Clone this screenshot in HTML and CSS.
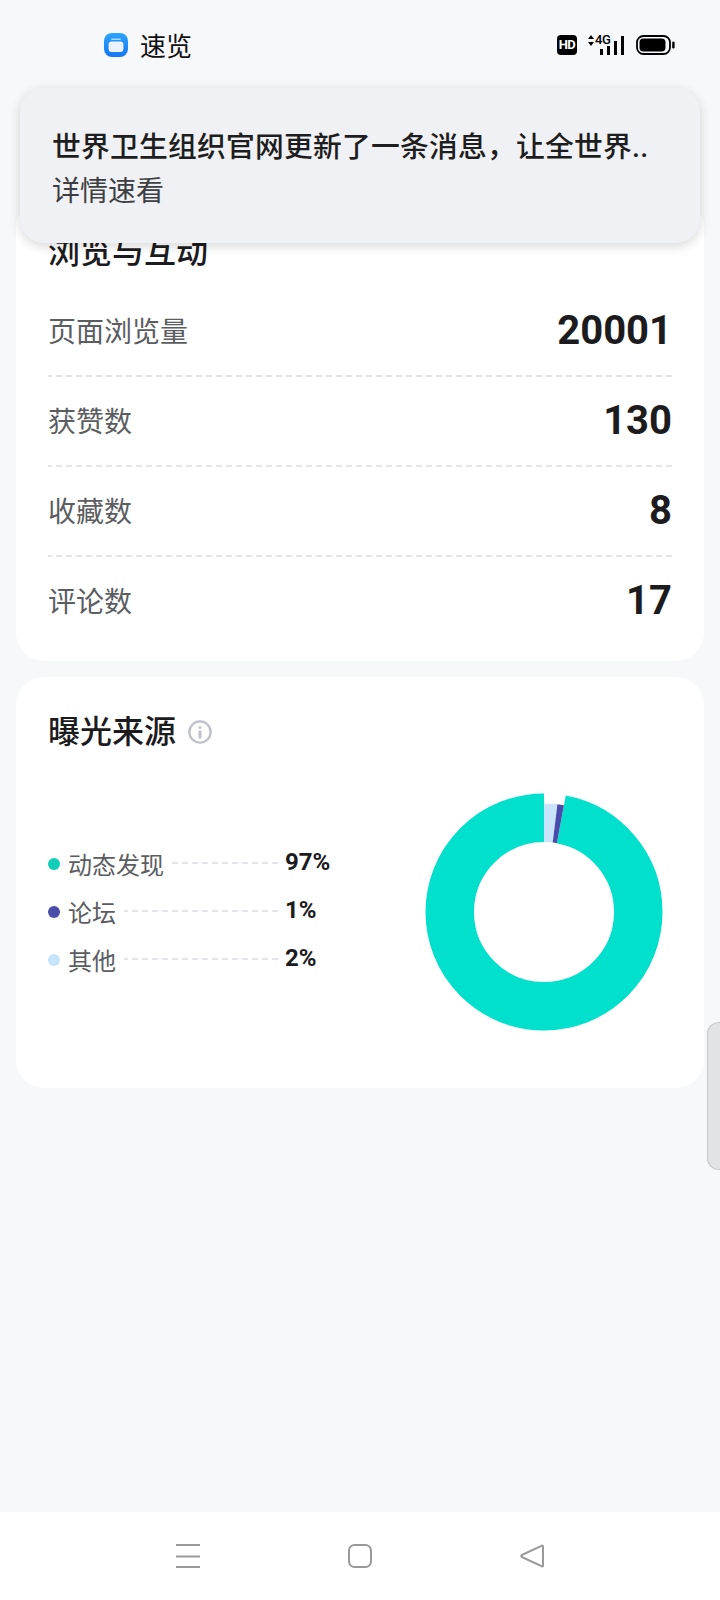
FILE: index.html
```html
<!DOCTYPE html>
<html lang="zh-CN">
<head>
    <meta charset="UTF-8">
    <meta name="viewport" content="width=device-width, initial-scale=1.0">
    <title>速览</title>

    <link rel="stylesheet" href="styles.css">
</head>
<body>

<header class="status-bar">
    <div class="app-name">
        <svg class="app-icon" width="24" height="24" viewBox="0 0 24 24">
            <defs>
                <linearGradient id="appBlue" x1="0" y1="0" x2="0" y2="1">
                    <stop offset="0" stop-color="#2aa4fb"/>
                    <stop offset="1" stop-color="#1676f3"/>
                </linearGradient>
            </defs>
            <rect width="24" height="24" rx="8" fill="url(#appBlue)"/>
            <rect x="7" y="5.4" width="10" height="1.6" rx="0.8" fill="#a9d6fd"/>
            <rect x="4.6" y="8.4" width="14.8" height="10.6" rx="3" fill="#eaf3ff"/>
        </svg>
        <span>速览</span>
    </div>
    <div class="status-icons">
        <span class="hd-badge">HD</span>
        <div class="signal">
            <svg class="signal-arrows" width="6" height="11" viewBox="0 0 6 11">
                <path d="M3 0 L6 4 H0 Z M3 11 L0 7 H6 Z" fill="#000"/>
            </svg>
            <span class="signal-type">4G</span>
            <div class="signal-bars">
                <i class="bar bar-1"></i>
                <i class="bar bar-2"></i>
                <i class="bar bar-3"></i>
                <i class="bar bar-4"></i>
            </div>
        </div>
        <svg width="39" height="20" viewBox="0 0 39 20">
            <rect x="1" y="1" width="33" height="18" rx="6.5" fill="none" stroke="#000" stroke-width="1.8"/>
            <rect x="3.5" y="3.5" width="26" height="13" rx="4" fill="#000"/>
            <rect x="36.2" y="6.5" width="2.4" height="7" rx="1.2" fill="#000"/>
        </svg>
    </div>
</header>

<div class="toast">
    <p class="toast-title">世界卫生组织官网更新了一条消息，让全世界..</p>
    <p class="toast-sub">详情速看</p>
</div>

<main class="content">
    <section class="card card-stats">
        <h2 class="card-title">浏览与互动</h2>
        <div class="stat-row">
            <span class="stat-label">页面浏览量</span>
            <span class="stat-value">20001</span>
        </div>
        <div class="stat-row">
            <span class="stat-label">获赞数</span>
            <span class="stat-value">130</span>
        </div>
        <div class="stat-row">
            <span class="stat-label">收藏数</span>
            <span class="stat-value">8</span>
        </div>
        <div class="stat-row">
            <span class="stat-label">评论数</span>
            <span class="stat-value">17</span>
        </div>
    </section>

    <section class="card card-source">
        <h2 class="card-title">
            曝光来源
            <svg class="info-icon" width="24" height="24" viewBox="0 0 24 24">
                <circle cx="12" cy="12" r="10.6" fill="none" stroke="#bfc2c9" stroke-width="2.4"/>
                <circle cx="12" cy="7.4" r="1.5" fill="#bfc2c9"/>
                <rect x="10.5" y="10.4" width="3" height="8" rx="0.6" fill="#bfc2c9"/>
            </svg>
        </h2>
        <div class="source-body">
            <ul class="legend">
                <li class="legend-row">
                    <i class="dot dot-feed"></i>
                    <span class="legend-label">动态发现</span>
                    <span class="legend-dash"></span>
                    <span class="legend-value">97%</span>
                </li>
                <li class="legend-row">
                    <i class="dot dot-forum"></i>
                    <span class="legend-label">论坛</span>
                    <span class="legend-dash"></span>
                    <span class="legend-value">1%</span>
                </li>
                <li class="legend-row">
                    <i class="dot dot-other"></i>
                    <span class="legend-label">其他</span>
                    <span class="legend-dash"></span>
                    <span class="legend-value">2%</span>
                </li>
            </ul>
            <svg class="donut" width="238" height="238" viewBox="0 0 238 238">
                <g transform="rotate(-90 119 119)" fill="none">
                    <circle cx="119" cy="119" r="94.25" stroke="#00e0cd" stroke-width="48.5" pathLength="360" stroke-dasharray="349.4 10.6" stroke-dashoffset="-10.6"/>
                    <circle cx="119" cy="119" r="89.25" stroke="#c8e4fb" stroke-width="38.5" pathLength="360" stroke-dasharray="7.2 352.8"/>
                    <circle cx="119" cy="119" r="89.25" stroke="#4a4cab" stroke-width="38.5" pathLength="360" stroke-dasharray="3.4 356.6" stroke-dashoffset="-7.2"/>
                </g>
            </svg>
        </div>
    </section>
</main>

<div class="side-handle"></div>

<nav class="nav-bar">
    <svg width="24" height="24" viewBox="0 0 24 24">
        <path d="M0 1 H24 M0 12.5 H24 M0 23 H24" stroke="#9a9a9a" stroke-width="2" fill="none"/>
    </svg>
    <svg width="24" height="24" viewBox="0 0 24 24">
        <rect x="1" y="1" width="22" height="22" rx="5.5" fill="none" stroke="#9a9a9a" stroke-width="2"/>
    </svg>
    <svg width="24" height="24" viewBox="0 0 24 24">
        <path d="M22 1.6 Q23 1.2 23 2.6 V21.4 Q23 22.8 22 22.4 L1.8 13 Q0.6 12 1.8 11 Z" fill="none" stroke="#9a9a9a" stroke-width="2" stroke-linejoin="round"/>
    </svg>
</nav>

</body>
</html>
```

FILE: styles.css
```css
* {
    box-sizing: border-box;
}

body {
    font-family: Roboto, 'Noto Sans CJK SC', sans-serif;
    margin: 0;
    padding: 0;
    width: 720px;
    height: 1600px;
    overflow: hidden;
    position: relative;
    display: flex;
    flex-direction: column;
    background-color: #f7f8fa;
    color: #1c1c1e;
}

/* status bar */
.status-bar {
    height: 90px;
    flex-shrink: 0;
    display: flex;
    align-items: center;
    justify-content: space-between;
    padding: 0 45px 0 104px;
}

.app-name {
    display: flex;
    align-items: center;
    gap: 12px;
    font-size: 26px;
    line-height: 24px;
    color: #111;
}

.app-name span {
    margin-top: 4px;
}

.status-icons {
    display: flex;
    align-items: center;
    gap: 10px;
}

.hd-badge {
    width: 20px;
    height: 20px;
    margin-right: 1px;
    border-radius: 4px;
    background-color: #000;
    color: #fff;
    font-size: 13px;
    font-weight: 700;
    line-height: 20px;
    text-align: center;
    letter-spacing: -0.5px;
}

.signal {
    position: relative;
    width: 38px;
    height: 20px;
}

.signal-arrows {
    position: absolute;
    left: 0;
    top: 0;
}

.signal-type {
    position: absolute;
    left: 7px;
    top: -2px;
    font-size: 13px;
    font-weight: 500;
    line-height: 14px;
    color: #000;
    letter-spacing: -0.3px;
}

.signal-bars {
    position: absolute;
    right: 2px;
    bottom: 0;
    display: flex;
    align-items: flex-end;
    gap: 3.5px;
}

.bar {
    display: block;
    width: 3.5px;
    background-color: #000;
}

.bar-1 { height: 6px; }
.bar-2 { height: 9px; }
.bar-3 { height: 14px; }
.bar-4 { height: 19px; }

/* notification over the page */
.toast {
    position: absolute;
    left: 20px;
    top: 88px;
    width: 680px;
    height: 155px;
    padding: 38px 32px 0 32px;
    border-radius: 24px;
    background-color: #f0f1f5;
    box-shadow: 0 3px 12px rgba(0, 0, 0, 0.16);
    z-index: 2;
}

.toast p {
    margin: 0;
    white-space: nowrap;
}

.toast-title {
    font-size: 28.8px;
    font-weight: 500;
    line-height: 42px;
    letter-spacing: 0.2px;
    color: #1e1e20;
}

.toast-sub {
    font-size: 28px;
    line-height: 48px;
    color: #3e3f42;
}

/* cards */
.content {
    flex: 1;
    padding: 110px 16px 0;
    display: flex;
    flex-direction: column;
    gap: 16px;
}

.card {
    background-color: #fff;
    border-radius: 28px;
}

.card-title {
    margin: 0;
    font-size: 32px;
    font-weight: 500;
    line-height: 32px;
    display: flex;
    align-items: center;
    gap: 12px;
}

.card-stats {
    height: 461px;
    padding: 36px 32px 16px 32px;
}

.card-stats .card-title {
    margin-bottom: 19px;
}

.stat-row {
    height: 90px;
    display: flex;
    align-items: center;
    justify-content: space-between;
    padding-bottom: 4px;
    background: repeating-linear-gradient(to left, #e3e4e8 0, #e3e4e8 6px, transparent 6px, transparent 10px) left bottom / 100% 2px no-repeat;
}

.stat-row:last-child {
    background: none;
}

.stat-label {
    font-size: 28px;
    color: #5b5d61;
}

.stat-value {
    font-size: 40px;
    font-weight: 700;
    color: #1c1c1e;
}

.card-source {
    height: 411px;
    padding: 39px 41px 0 32px;
}

.info-icon {
    flex-shrink: 0;
}

.source-body {
    margin-top: 45px;
    display: flex;
    align-items: center;
    justify-content: space-between;
}

.legend {
    list-style: none;
    margin: 0;
    padding: 0;
    width: 292px;
    display: flex;
    flex-direction: column;
}

.legend-row {
    height: 48px;
    display: flex;
    align-items: center;
}

.dot {
    width: 12px;
    height: 12px;
    border-radius: 50%;
    margin-right: 8px;
    flex-shrink: 0;
}

.dot-feed { background-color: #10cdb9; }
.dot-forum { background-color: #4b4ea8; }
.dot-other { background-color: #c6e4fb; }

.legend-label {
    font-size: 24px;
    line-height: 48px;
    padding-top: 4px;
    color: #5b5d61;
}

.legend-dash {
    flex: 1;
    height: 2px;
    margin: -2px 9px 0 8px;
    background: repeating-linear-gradient(to left, #e3e5ea 0, #e3e5ea 6px, transparent 6px, transparent 10px);
}

.legend-value {
    width: 55px;
    margin-left: -2px;
    margin-top: -4px;
    font-size: 24px;
    font-weight: 700;
    color: #1c1c1e;
}

.donut {
    flex-shrink: 0;
}

/* edge handle on the right */
.side-handle {
    position: absolute;
    right: 0;
    top: 1022px;
    width: 13px;
    height: 148px;
    border: 1px solid #c6c7c9;
    border-right: none;
    border-radius: 12px 0 0 12px;
    background-color: #e2e3e5;
}

/* bottom navigation */
.nav-bar {
    height: 88px;
    flex-shrink: 0;
    background-color: #fff;
    display: flex;
    align-items: flex-start;
    justify-content: center;
    gap: 148px;
    padding-top: 32px;
}
```
